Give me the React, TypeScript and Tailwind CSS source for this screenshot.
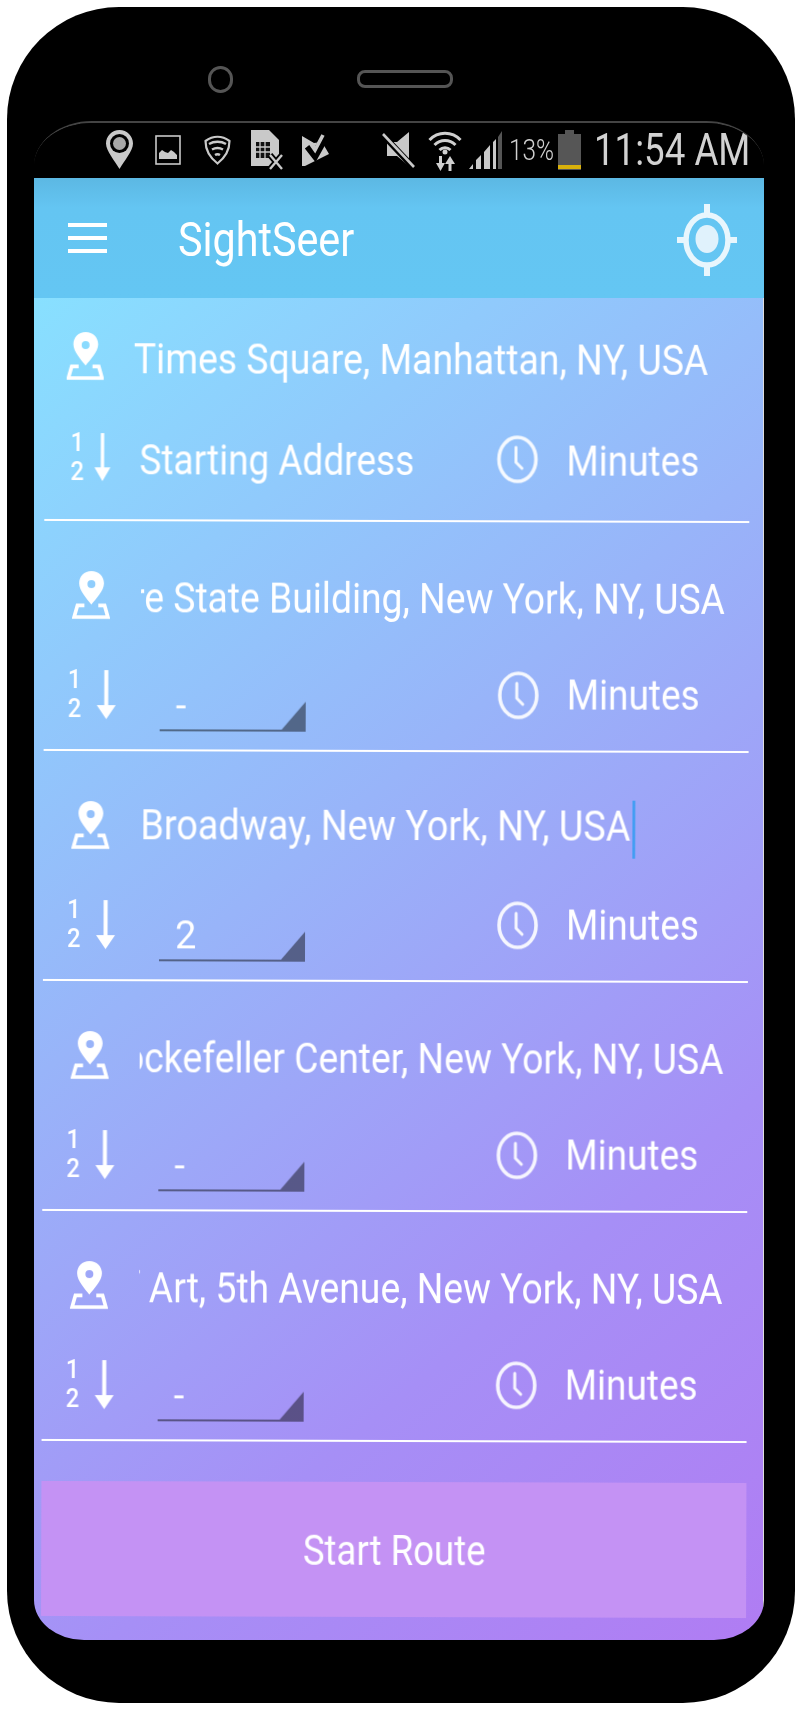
import React from "react";

const STOPS = [
  { address: "Times Square, Manhattan, NY, USA", first: true, align: "left", stretch: "scale-x-[0.89]" },
  { address: "Empire State Building, New York, NY, USA", value: "-", align: "right", stretch: "scale-x-[0.887]" },
  { address: "Broadway, New York, NY, USA", value: "2", align: "left", caret: true, stretch: "scale-x-[0.898]" },
  { address: "Rockefeller Center, New York, NY, USA", value: "-", align: "right", stretch: "scale-x-[0.887]" },
  { address: "Metropolitan Museum of Art, 5th Avenue, New York, NY, USA", value: "-", align: "right", stretch: "scale-x-[0.887]" },
];

function PinIcon({ className }: { className: string }) {
  return (
    <svg viewBox="0 0 112 145" className={className}>
      <path
        fillRule="evenodd"
        fill="#fff"
        d="M57 0C35 0 20 16 20 37c0 22 24 48 37 64 13-16 38-42 38-64C95 16 79 0 57 0Zm0 27a12 12 0 1 1 0 24 12 12 0 0 1 0-24Z"
      />
      <path d="M36 104H15L5 139h102L97 104H78" fill="none" stroke="#fff" strokeWidth="11" />
    </svg>
  );
}

function OrderIcon({ wide }: { wide: boolean }) {
  return (
    <div className={`flex items-center ${wide ? "gap-[14px]" : "gap-[12px] -mt-[6px]"}`}>
      <div className={`flex flex-col font-[Roboto,sans-serif] font-medium text-[25px] leading-[29px] text-white ${wide ? "w-[15px]" : "w-[12px]"}`}>
        <span className="inline-block origin-left scale-x-[0.95]">1</span>
        <span className="inline-block origin-left scale-x-[0.95]">2</span>
      </div>
      <svg viewBox="0 0 19 49" className={wide ? "w-[19px] h-[49px]" : "w-[16px] h-[48px]"} preserveAspectRatio="none">
        <path d="M7.5 0h4v35h7.5l-9.5 14L0 35h7.5Z" fill="#fff" />
      </svg>
    </div>
  );
}

function ClockIcon({ first }: { first?: boolean }) {
  return (
    <svg viewBox="0 0 41 48" className={first ? "w-[42px] h-[48px] shrink-0 -mt-[4px]" : "w-[41px] h-[48px] shrink-0"}>
      <ellipse cx="20.5" cy="24" rx="18.5" ry="22" fill="none" stroke="#fff" strokeOpacity="0.9" strokeWidth="3.6" />
      <path d="M19 12v15l6 6" fill="none" stroke="#fff" strokeOpacity="0.9" strokeWidth="3" strokeLinecap="round" />
    </svg>
  );
}

function Spinner({ value }: { value: string }) {
  return (
    <div className="relative mt-[18px] ml-[41px] w-[146px] h-[55px] border-b-2 border-black/45">
      <span className="absolute left-[16px] bottom-[2px] font-[Roboto,sans-serif] text-[38px] leading-[44px] text-white">
        {value}
      </span>
      <svg viewBox="0 0 24 28" className="absolute right-0 bottom-0 w-[24px] h-[28px]">
        <path d="M24 0v28H0Z" fill="#000" fillOpacity="0.45" />
      </svg>
    </div>
  );
}

function Stop({ stop }: { stop: (typeof STOPS)[number] }) {
  const { address, first, align, value, caret, stretch } = stop;
  return (
    <div className={`border-b-2 border-white ${first ? "pt-[22px] pb-[19px]" : "pt-[37px] pb-[15px]"}`}>
      <div className="flex items-center h-[80px]">
        <PinIcon className={`-mt-[7px] h-[48px] shrink-0 ${first ? "ml-[22px] w-[37px]" : "ml-[28px] w-[38px]"}`} />
        <div
          className={`flex h-[80px] items-center overflow-hidden ${
            first ? "ml-[30px] w-[600px]" : "ml-[31px] w-[584px]"
          } ${align === "right" ? "justify-end" : "justify-start"}`}
        >
          <span
            className={`inline-block shrink-0 whitespace-nowrap font-[Roboto,sans-serif] text-[42px] leading-[50px] text-white ${stretch} ${
              align === "right" ? "origin-right" : "origin-left"
            }`}
          >
            {address}
            {caret && <span className="inline-block w-[3px] h-[58px] ml-[2px] bg-[#3f9df3] align-middle" />}
          </span>
        </div>
      </div>
      <div className={`flex items-center h-[80px] ${first ? "mt-[21px]" : "mt-[16px]"}`}>
        <div className={first ? "ml-[26px] w-[40px]" : "ml-[24px] w-[51px]"}>
          <OrderIcon wide={!first} />
        </div>
        {first ? (
          <span className="inline-block ml-[29px] w-[357px] whitespace-nowrap origin-left scale-x-[0.88] font-[Roboto,sans-serif] text-[42px] leading-[50px] text-white">
            Starting Address
          </span>
        ) : (
          <div className="w-[379px]">
            <Spinner value={value ?? ""} />
          </div>
        )}
        <ClockIcon first={first} />
        <span className="inline-block ml-[28px] whitespace-nowrap origin-left scale-x-[0.88] font-[Roboto,sans-serif] text-[42px] leading-[50px] text-white">
          Minutes
        </span>
      </div>
    </div>
  );
}

function StatusBar() {
  return (
    <div className="flex items-center h-[55px] shrink-0 bg-black pl-[72px] pb-[2px]">
      {/* location */}
      <svg viewBox="0 0 27 39" className="w-[27px] h-[39px] shrink-0">
        <path d="M13.5 0C6 0 0 6 0 13.5 0 21 9 31 13.5 39 18 31 27 21 27 13.5 27 6 21 0 13.5 0Z" fill="#c9c9c9" />
        <circle cx="13.5" cy="13.5" r="9.5" fill="#000" />
        <circle cx="13.5" cy="13.5" r="6.5" fill="#a8a8a8" />
      </svg>
      {/* gallery */}
      <svg viewBox="0 0 26 30" className="ml-[22px] w-[26px] h-[30px] shrink-0">
        <rect x="1" y="1" width="24" height="28" fill="none" stroke="#c9c9c9" strokeWidth="1.6" />
        <path d="M4 24v-6l3-3 3 2 3 1 3-3 3 2 3 3v4Z" fill="#c9c9c9" />
      </svg>
      {/* lookout shield */}
      <svg viewBox="0 0 27 30" className="ml-[23px] w-[27px] h-[30px] shrink-0">
        <path d="M1.5 6C9 .5 18 .5 25.5 6c0 9-5 17-12 22.500C6.500 23 1.500 15 1.500 6Z" fill="none" stroke="#c9c9c9" strokeWidth="2.2" />
        <path d="M5 9c5-3 12-3 17 0M8 14.500c3.500-2 7.500-2 11 0M11 20c1.500-1 3.500-1 5 0" fill="none" stroke="#c9c9c9" strokeWidth="2.4" />
      </svg>
      {/* no sim */}
      <svg viewBox="0 0 32 40" className="ml-[20px] w-[32px] h-[40px] shrink-0">
        <path d="M0 0h18l10 10v26H0Z" fill="#c9c9c9" />
        <path d="M5 12h14v16H5Z" fill="#111" />
        <path d="M9 12v16M14 12v16M5 17h14M5 22h14" stroke="#c9c9c9" strokeWidth="1.3" />
        <path d="M19 25l12 14M31 25L19 39" stroke="#000" strokeWidth="6" />
        <path d="M19 25l12 14M31 25L19 39" stroke="#c9c9c9" strokeWidth="2.4" />
      </svg>
      {/* play check */}
      <svg viewBox="0 0 27 32" className="ml-[19px] w-[27px] h-[32px] shrink-0">
        <path d="M0 2l12 7 8-1 7 12L3 32H0Z" fill="#c9c9c9" />
        <path d="M6 12l7 9 10-18" fill="none" stroke="#000" strokeWidth="8" />
        <path d="M8 9l5 7 8-15" fill="none" stroke="#c9c9c9" strokeWidth="3.6" />
      </svg>
      {/* mute */}
      <svg viewBox="0 0 33 38" className="ml-[53px] w-[33px] h-[38px] shrink-0">
        <path d="M27 1v34L15 25H5V11h10Z" fill="#c9c9c9" />
        <path d="M1 4l30 32" stroke="#000" strokeWidth="6" />
        <path d="M1 3l31 33" stroke="#c9c9c9" strokeWidth="2.6" />
      </svg>
      {/* wifi with data arrows */}
      <svg viewBox="0 0 34 43" className="ml-[13px] w-[34px] h-[43px] shrink-0">
        <path d="M1.500 12C10 3 24 3 32.500 12M6.500 17c6-6 15-6 21 0M11.500 22c3-3 8-3 11 0" fill="none" stroke="#d0d0d0" strokeWidth="3" />
        <circle cx="17" cy="24" r="2.500" fill="#d0d0d0" />
        <path d="M11 28h3v7h3l-4.500 8L8 35h3ZM22 28l5 8h-3.500v7h-3v-7H17Z" fill="#d0d0d0" />
      </svg>
      {/* signal */}
      <svg viewBox="0 0 33 38" className="ml-[7px] w-[33px] h-[38px] shrink-0">
        <path d="M0 38l4-5v5ZM7 38v-9l5-5v14ZM15 38V21l6-7v24ZM24 38V11l3-3v30Z" fill="#c9c9c9" />
        <path d="M29 38V6l4-6v38Z" fill="#555" />
      </svg>
      <span className="inline-block ml-[7px] w-[43px] whitespace-nowrap origin-left scale-x-[0.84] font-[Roboto,sans-serif] font-light text-[29px] leading-[34px] text-[#d0d0d0]">
        13%
      </span>
      {/* battery */}
      <svg viewBox="0 0 23 40" className="ml-[6px] w-[23px] h-[40px] shrink-0">
        <path d="M7 0h9v4h7v36H0V4h7Z" fill="#565656" />
        <path d="M0 35h23v4H0Z" fill="#d9b10b" />
      </svg>
      <span className="inline-block ml-[13px] w-[150px] whitespace-nowrap origin-left scale-x-[0.815] font-[Roboto,sans-serif] text-[45px] leading-[52px] text-[#d2d2d2]">
        11:54 AM
      </span>
    </div>
  );
}

function AppBar() {
  return (
    <div className="flex items-center h-[120px] shrink-0 bg-gradient-to-b from-[#5cb8e3] via-[#64c5f2] via-[25%] to-[#64c6f3]">
      <div className="ml-[34px] flex w-[39px] flex-col gap-[8.500px]">
        <span className="h-[4.500px] bg-white" />
        <span className="h-[4.500px] bg-white" />
        <span className="h-[4.500px] bg-white" />
      </div>
      <span className="inline-block ml-[71px] mt-[4px] whitespace-nowrap origin-left scale-x-[0.86] font-[Roboto,sans-serif] text-[48px] leading-[56px] text-white">
        SightSeer
      </span>
      <svg viewBox="0 0 60 72" className="ml-auto mr-[27px] mt-[4px] w-[60px] h-[72px]">
        <ellipse cx="30" cy="36" rx="21" ry="25" fill="none" stroke="#e8f6fd" strokeWidth="5.500" />
        <ellipse cx="30" cy="35" rx="11.500" ry="14" fill="#e0f2fc" />
        <path d="M30 0v10M30 62v10M0 36h8M52 36h8" stroke="#e8f6fd" strokeWidth="6" />
      </svg>
    </div>
  );
}

export default function App() {
  return (
    <div className="w-[800px] h-[1710px] bg-white overflow-hidden">
      <div className="ml-[7px] mt-[7px] inline-flex h-[1696px] w-[788px] flex-col items-center rounded-[112px/112px] bg-black align-top">
        {/* camera and earpiece */}
        <div className="flex h-[114px] w-full shrink-0 items-center pt-[30px]">
          <span className="ml-[201px] h-[27px] w-[25px] rounded-full border-[3px] border-[#555]" />
          <span className="ml-[124px] h-[18px] w-[96px] rounded-[8px] border-[3px] border-[#555]" />
        </div>
        <div className="relative mr-[4px] flex h-[1519px] w-[730px] flex-col overflow-hidden rounded-[58px_58px_50px_50px/45px_45px_40px_40px] border-t-2 border-[#444] bg-black font-[Roboto,sans-serif]">
          <StatusBar />
          <AppBar />
          <div className="flex-1 border-r border-[#ddd] bg-[linear-gradient(140deg,#88e0ff_0%,#98b4f9_40%,#a68ff6_72%,#b07cf3_100%)]">
            {/* the source photo is tilted and a little soft */}
            <div className="rotate-[0.17deg] blur-[0.4px] pl-[9px] pr-[15px]">
              {STOPS.map((stop) => (
                <Stop key={stop.address} stop={stop} />
              ))}
              <button className="mt-[40px] flex h-[135px] w-full items-center justify-center bg-[#c492f4] pt-[3px]">
                <span className="inline-block whitespace-nowrap scale-x-[0.87] font-[Roboto,sans-serif] text-[42px] leading-[50px] text-white">
                  Start Route
                </span>
              </button>
            </div>
          </div>
        </div>
      </div>
    </div>
  );
}
